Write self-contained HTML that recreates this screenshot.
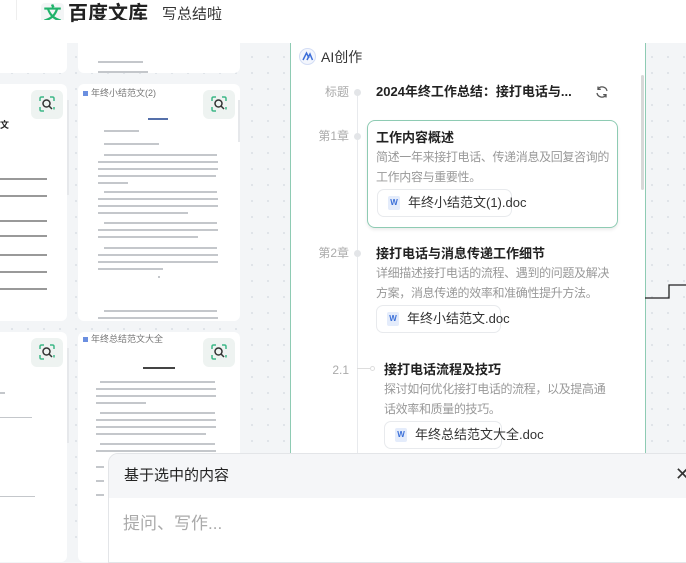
<!DOCTYPE html>
<html><head><meta charset="utf-8"><style>
*{margin:0;padding:0;box-sizing:border-box}
body{width:686px;height:550px;overflow:hidden;position:relative;font-family:"Liberation Sans","Noto Sans CJK SC",sans-serif;background:#f3f5f7}
.bg{position:absolute;left:0;top:43px;width:686px;height:507px;background-color:#f3f5f7;background-image:radial-gradient(circle,#dfe3e8 1px,transparent 1.3px);background-size:16px 16px;background-position:4px 6px}
.top{position:absolute;left:0;top:0;width:686px;height:43px;background:#fff}
.abs{position:absolute;line-height:1.2}
.card{position:absolute;background:#fff;border-radius:6px}
.ln{position:absolute;height:2px;background:#c4c7cb}
.sbtn{position:absolute;width:32px;height:29px;border-radius:6px;background:#eef3f1}
.sbtn svg{position:absolute;left:8px;top:6px}
.lbl{position:absolute;font-size:12px;color:#aaa;text-align:right;width:40px;line-height:16px}
.dot{position:absolute;width:7px;height:7px;border-radius:50%;background:#e3e5e8}
.t{position:absolute;font-size:13px;font-weight:bold;color:#222;white-space:nowrap;line-height:18px}
.d{position:absolute;font-size:12px;letter-spacing:-0.35px;color:#999;line-height:20px}
.chip{position:absolute;height:28px;border:1px solid #e8eaed;border-radius:7px;background:#fff;font-size:13px;color:#333;padding-left:30px;line-height:26px;white-space:nowrap}
.chip i{position:absolute;left:10px;top:6px;width:12px;height:14px;border-radius:2px;background:#e4ecfb;color:#3a6fd8;font-size:8px;font-style:normal;font-weight:bold;text-align:center;line-height:14px}
</style></head><body>
<div class="bg"></div>
<div class="top">
 <div class="abs" style="left:16px;top:0;width:1px;height:43px;background:#eee"></div>
 <div class="abs" style="left:41px;top:3px;width:23px;height:23px;border-radius:4px;background:#f3f5f6;color:#20b36b;font-size:18px;font-weight:bold;text-align:center;line-height:23px">文</div>
 <div class="abs" style="left:68px;top:2px;font-size:20px;line-height:25px;font-weight:bold;color:#222">百度文库</div>
 <div class="abs" style="left:162px;top:5px;font-size:15px;line-height:19px;color:#333">写总结啦</div>
</div>

<svg width="0" height="0" style="position:absolute"><defs><g id="sc"><path d="M1 5V2.5Q1 1 2.5 1H5M11 1h2.5Q15 1 15 2.5V5M1 11v2.5Q1 15 2.5 15H5M15 11v2.5" fill="none" stroke="#3db887" stroke-width="1.5"/><circle cx="7.5" cy="7.5" r="3.5" fill="none" stroke="#333" stroke-width="1.5"/><path d="M10 10l3 3" stroke="#333" stroke-width="1.5"/></g></defs></svg>

<!-- left column -->
<div class="card" style="left:-6px;top:20px;width:73px;height:53px;border-radius:0 0 6px 0"></div>
<div class="card" style="left:-6px;top:84px;width:73px;height:237px"></div>
<div class="card" style="left:-6px;top:332px;width:73px;height:230px"></div>
<div class="sbtn" style="left:31px;top:90px"><svg width="16" height="16"><use href="#sc"/></svg></div>
<div class="sbtn" style="left:31px;top:338px"><svg width="16" height="16"><use href="#sc"/></svg></div>
<div class="abs" style="left:0;top:120px;font-size:9px;font-weight:bold;color:#222">文</div>
<div class="ln" style="left:0;top:178px;width:47px;background:#999"></div>
<div class="ln" style="left:0;top:195px;width:47px;background:#999"></div>
<div class="ln" style="left:0;top:220px;width:47px;background:#999"></div>
<div class="ln" style="left:0;top:235px;width:47px;background:#999"></div>
<div class="ln" style="left:0;top:254px;width:47px;background:#999"></div>
<div class="ln" style="left:0;top:271px;width:47px;background:#999"></div>
<div class="ln" style="left:0;top:288px;width:47px;background:#999"></div>
<div class="ln" style="left:0;top:392px;width:5px"></div>
<div class="ln" style="left:0;top:417px;width:32px;height:1px"></div>
<div class="ln" style="left:0;top:496px;width:35px;height:1px"></div>
<div class="abs" style="left:67px;top:100px;width:2px;height:95px;background:#e6e8eb"></div>
<div class="abs" style="left:67px;top:348px;width:2px;height:95px;background:#e6e8eb"></div>

<!-- middle column -->
<div class="card" style="left:78px;top:20px;width:162px;height:53px;border-radius:0 0 6px 6px"></div>
<div class="ln" style="left:98px;top:61px;width:45px"></div>
<div class="ln" style="left:98px;top:71px;width:50px"></div>
<div class="card" style="left:78px;top:84px;width:162px;height:237px"></div>
<div class="abs" style="left:83px;top:88px;font-size:9px;color:#777"><span style="display:inline-block;width:5px;height:5px;background:#6b8fe0;margin-right:3px"></span>年终小结范文(2)</div>
<div class="sbtn" style="left:203px;top:90px"><svg width="16" height="16"><use href="#sc"/></svg></div>
<div class="abs" style="left:238px;top:100px;width:2px;height:42px;background:#e6e8eb"></div>
<div class="ln" style="left:148px;top:118px;width:20px;background:#5570aa"></div>
<div class="ln" style="left:104px;top:130px;width:35px"></div>
<div class="ln" style="left:104px;top:143px;width:55px"></div>
<div class="ln" style="left:104px;top:154px;width:113px"></div><div class="ln" style="left:98px;top:161px;width:120px"></div><div class="ln" style="left:98px;top:168px;width:120px"></div><div class="ln" style="left:98px;top:175px;width:118px"></div><div class="ln" style="left:98px;top:182px;width:30px"></div>
<div class="ln" style="left:104px;top:191px;width:113px"></div><div class="ln" style="left:98px;top:198px;width:120px"></div><div class="ln" style="left:98px;top:205px;width:120px"></div><div class="ln" style="left:98px;top:212px;width:90px"></div>
<div class="ln" style="left:104px;top:222px;width:113px"></div><div class="ln" style="left:98px;top:229px;width:120px"></div><div class="ln" style="left:98px;top:236px;width:100px"></div>
<div class="ln" style="left:104px;top:247px;width:113px"></div><div class="ln" style="left:98px;top:254px;width:120px"></div><div class="ln" style="left:98px;top:261px;width:120px"></div><div class="ln" style="left:98px;top:268px;width:65px"></div>
<div class="ln" style="left:158px;top:276px;width:2px"></div>
<div class="ln" style="left:104px;top:310px;width:113px"></div><div class="ln" style="left:98px;top:317px;width:120px"></div>

<div class="card" style="left:78px;top:332px;width:162px;height:230px"></div>
<div class="abs" style="left:83px;top:334px;font-size:9px;color:#777"><span style="display:inline-block;width:5px;height:5px;background:#6b8fe0;margin-right:3px"></span>年终总结范文大全</div>
<div class="sbtn" style="left:203px;top:338px"><svg width="16" height="16"><use href="#sc"/></svg></div>
<div class="ln" style="left:143px;top:367px;width:32px;background:#444"></div>
<div class="ln" style="left:100px;top:381px;width:115px"></div><div class="ln" style="left:96px;top:388px;width:120px"></div><div class="ln" style="left:96px;top:395px;width:120px"></div><div class="ln" style="left:96px;top:402px;width:50px"></div>
<div class="ln" style="left:100px;top:412px;width:115px"></div><div class="ln" style="left:96px;top:419px;width:120px"></div><div class="ln" style="left:96px;top:426px;width:120px"></div><div class="ln" style="left:96px;top:433px;width:110px"></div>
<div class="ln" style="left:100px;top:443px;width:115px"></div><div class="ln" style="left:96px;top:450px;width:120px"></div>
<div class="ln" style="left:96px;top:466px;width:8px"></div><div class="ln" style="left:96px;top:480px;width:8px"></div><div class="ln" style="left:96px;top:494px;width:8px"></div>

<!-- right panel -->
<div class="abs" style="left:290px;top:43px;width:356px;height:520px;background:#fff;border-left:1px solid #8ecbb3;border-right:1px solid #8ecbb3"></div>
<div class="abs" style="left:641px;top:75px;width:3px;height:115px;background:#d8d8d8;border-radius:2px"></div>
<div class="abs" style="left:299px;top:48px;width:17px;height:17px;border-radius:50%;border:1px solid #d3ddf5;background:#f3f6fd"><svg width="15" height="15" viewBox="0 0 15 15"><path d="M3 11 L6.5 4 L9 9 M7 11 L10 5 L12.5 11" fill="none" stroke="#3d6fd9" stroke-width="1.5"/></svg></div>
<div class="abs" style="left:321px;top:48px;font-size:14px;line-height:18px;color:#333">AI创作</div>

<div class="abs" style="left:357px;top:93px;width:1px;height:460px;background:#e8eaed"></div>
<div class="lbl" style="left:309px;top:84px">标题</div><div class="dot" style="left:354px;top:89px"></div>
<div class="t" style="left:376px;top:83px">2024年终工作总结：接打电话与...</div>
<svg class="abs" style="left:595px;top:85px" width="14" height="14" viewBox="0 0 14 14"><path d="M12 6 A5 5 0 0 0 3 4 M2 8 A5 5 0 0 0 11 10" fill="none" stroke="#555" stroke-width="1.3"/><path d="M3 1.5 V4.3 H5.8 M11 12.5 V9.7 H8.2" fill="none" stroke="#555" stroke-width="1.3"/></svg>

<div class="lbl" style="left:309px;top:128px">第1章</div><div class="dot" style="left:354px;top:133px"></div>
<div class="abs" style="left:367px;top:120px;width:251px;height:108px;border:1px solid #8ecbb3;border-radius:8px;box-shadow:0 2px 3px rgba(0,0,0,.08)"></div>
<div class="t" style="left:376px;top:129px">工作内容概述</div>
<div class="d" style="left:376px;top:147px;width:236px">简述一年来接打电话、传递消息及回复咨询的工作内容与重要性。</div>
<div class="chip" style="left:377px;top:189px;width:135px"><i>W</i>年终小结范文(1).doc</div>

<div class="lbl" style="left:309px;top:245px">第2章</div><div class="dot" style="left:354px;top:250px"></div>
<div class="t" style="left:376px;top:245px">接打电话与消息传递工作细节</div>
<div class="d" style="left:376px;top:263px;width:236px">详细描述接打电话的流程、遇到的问题及解决方案，消息传递的效率和准确性提升方法。</div>
<div class="chip" style="left:376px;top:305px;width:125px"><i>W</i>年终小结范文.doc</div>

<div class="lbl" style="left:309px;top:362px">2.1</div>
<div class="abs" style="left:357px;top:368px;width:14px;height:1px;background:#ddd"></div>
<div class="abs" style="left:370px;top:366px;width:5px;height:5px;border:1px solid #ddd;border-radius:50%;background:#fff"></div>
<div class="t" style="left:384px;top:361px">接打电话流程及技巧</div>
<div class="d" style="left:384px;top:379px;width:230px">探讨如何优化接打电话的流程，以及提高通话效率和质量的技巧。</div>
<div class="chip" style="left:384px;top:421px;width:118px"><i>W</i>年终总结范文大全.doc</div>

<!-- step line -->
<svg class="abs" style="left:645px;top:283px" width="41" height="17"><path d="M0 15 H24 V2 H41" fill="none" stroke="#222" stroke-width="1.3"/></svg>

<!-- popup -->
<div class="abs" style="left:108px;top:453px;width:600px;height:110px;background:#fff;border-top-left-radius:10px;border:1px solid #e3e5e8;overflow:hidden">
 <div style="height:44px;background:#f5f6f8"></div>
</div>
<div class="abs" style="left:124px;top:466px;font-size:15px;line-height:19px;color:#222">基于选中的内容</div>
<div class="abs" style="left:675px;top:464px;font-size:18px;line-height:20px;color:#333">✕</div>
<div class="abs" style="left:123px;top:513px;font-size:17px;line-height:22px;color:#aaa">提问、写作...</div>
</body></html>
